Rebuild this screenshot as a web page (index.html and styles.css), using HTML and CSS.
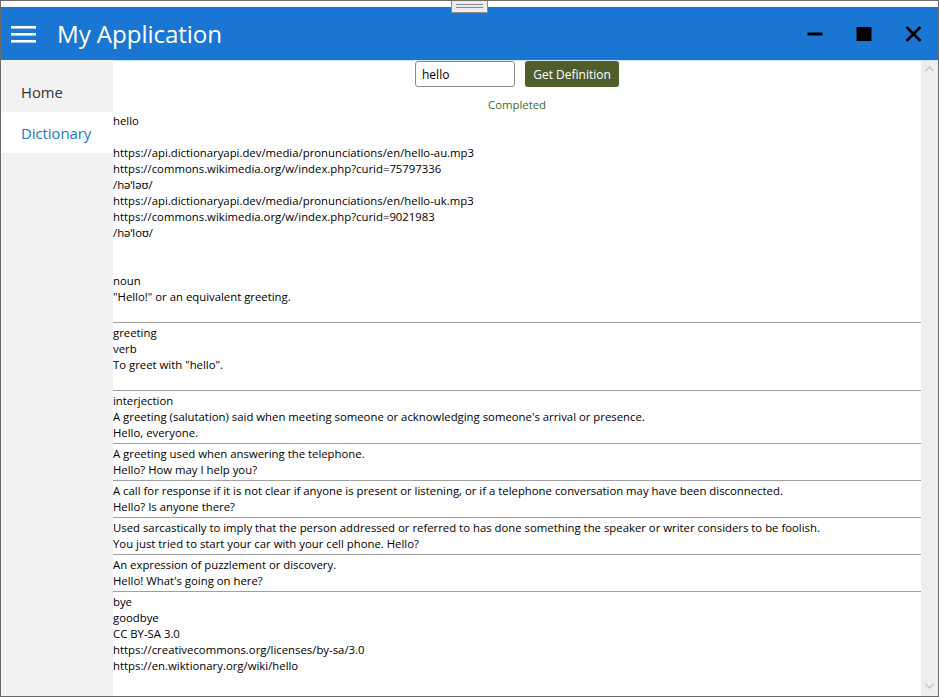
FILE: index.html
```html
<!DOCTYPE html>
<html>
<head>
<meta charset="utf-8">
<link rel="stylesheet" href="styles.css">
</head>
<body>
<div class="window">
  <div class="topstrip"></div>
  <div class="grip"><span></span><span></span></div>
  <header class="header">
    <svg class="hamburger" width="26" height="18" viewBox="0 0 26 18"><rect x="0" y="1" width="25" height="2.6" fill="#fff"/><rect x="0" y="8" width="25" height="2.6" fill="#fff"/><rect x="0" y="15" width="25" height="2.6" fill="#fff"/></svg>
    <h1 class="title">My Application</h1>
    <div class="controls">
      <svg class="ctl" width="16" height="16" viewBox="0 0 16 16"><rect x="0.5" y="6.5" width="15" height="3" fill="#000"/></svg>
      <svg class="ctl" width="16" height="16" viewBox="0 0 16 16"><rect x="0.5" y="1" width="15" height="14" fill="#000"/></svg>
      <svg class="ctl" width="17" height="16" viewBox="0 0 17 16"><path d="M1.5 1 L15.5 15 M15.5 1 L1.5 15" stroke="#000" stroke-width="2.8" fill="none"/></svg>
    </div>
  </header>
  <div class="main">
    <nav class="nav">
      <div class="nav-item">Home</div>
      <div class="nav-item active">Dictionary</div>
    </nav>
    <section class="content">
      <div class="scroll-area">
        <div class="form-row">
          <input class="word-input" type="text" value="hello">
          <button class="btn">Get Definition</button>
        </div>
        <div class="status">Completed</div>
        <div class="block first">
          <div>hello</div>
          <div class="blank"></div>
          <div>https://api.dictionaryapi.dev/media/pronunciations/en/hello-au.mp3</div>
          <div>https://commons.wikimedia.org/w/index.php?curid=75797336</div>
          <div>/həˈləʊ/</div>
          <div>https://api.dictionaryapi.dev/media/pronunciations/en/hello-uk.mp3</div>
          <div>https://commons.wikimedia.org/w/index.php?curid=9021983</div>
          <div>/həˈloʊ/</div>
          <div class="blank"></div>
          <div class="blank"></div>
          <div>noun</div>
          <div>"Hello!" or an equivalent greeting.</div>
          <div class="blank"></div>
        </div>
        <div class="block tight">
          <div>greeting</div>
          <div>verb</div>
          <div>To greet with "hello".</div>
          <div class="blank"></div>
        </div>
        <div class="block">
          <div>interjection</div>
          <div>A greeting (salutation) said when meeting someone or acknowledging someone's arrival or presence.</div>
          <div>Hello, everyone.</div>
        </div>
        <div class="block">
          <div>A greeting used when answering the telephone.</div>
          <div>Hello? How may I help you?</div>
        </div>
        <div class="block">
          <div>A call for response if it is not clear if anyone is present or listening, or if a telephone conversation may have been disconnected.</div>
          <div>Hello? Is anyone there?</div>
        </div>
        <div class="block">
          <div>Used sarcastically to imply that the person addressed or referred to has done something the speaker or writer considers to be foolish.</div>
          <div>You just tried to start your car with your cell phone. Hello?</div>
        </div>
        <div class="block">
          <div>An expression of puzzlement or discovery.</div>
          <div>Hello! What's going on here?</div>
        </div>
        <div class="block last">
          <div>bye</div>
          <div>goodbye</div>
          <div>CC BY-SA 3.0</div>
          <div>https://creativecommons.org/licenses/by-sa/3.0</div>
          <div>https://en.wiktionary.org/wiki/hello</div>
        </div>
      </div>
      <div class="scrollbar">
        <svg width="17" height="12" viewBox="0 0 17 12"><path d="M4.5 8 L8.5 4 L12.5 8" stroke="#c4c4c4" stroke-width="1.3" fill="none"/></svg>
        <svg width="17" height="12" viewBox="0 0 17 12"><path d="M4.5 4 L8.5 8 L12.5 4" stroke="#c4c4c4" stroke-width="1.3" fill="none"/></svg>
      </div>
    </section>
  </div>
</div>
</body>
</html>
```
FILE: styles.css
```css
* { box-sizing: border-box; }
html, body { margin: 0; padding: 0; background: #fff; }
body { font-family: "Open Sans", "Noto Sans", sans-serif; }

.window {
  position: relative;
  width: 939px;
  height: 697px;
  border: 1px solid #6b6b6b;
  display: flex;
  flex-direction: column;
  overflow: hidden;
}

.topstrip { height: 6px; background: #fff; flex: none; }

.grip {
  position: absolute;
  left: 450px;
  top: -1px;
  width: 37px;
  height: 13px;
  background: #ececf0;
  border: 1px solid #8c8c8c;
  border-top: none;
  display: flex;
  flex-direction: column;
  align-items: center;
  justify-content: center;
  gap: 2px;
  z-index: 2;
}
.grip span { display: block; width: 27px; height: 1px; background: #8a8a8a; }

.header {
  flex: none;
  height: 53px;
  background: #1976d2;
  display: flex;
  align-items: center;
  padding-left: 10px;
}
.hamburger { display: block; margin-top: 1px; }
.title {
  margin: 3px 0 0 20px;
  font-weight: 400;
  font-size: 24.2px;
  color: #fff;
  letter-spacing: -0.1px;
  line-height: 1;
  padding-bottom: 1px;
}
.controls {
  margin-left: auto;
  display: flex;
  align-items: center;
  gap: 33px;
  padding-right: 16px;
}
.ctl { display: block; }

.main { flex: 1; display: flex; min-height: 0; }

.nav {
  width: 112px;
  flex: none;
  background: #f2f2f2;
  padding-top: 11px;
}
.nav-item {
  height: 41px;
  line-height: 41px;
  padding: 1px 0 0 20px;
  font-size: 14.8px;
  color: #333;
}
.nav-item.active { background: #fff; color: #1976d2; }

.content {
  flex: 1;
  display: flex;
  min-width: 0;
  border-top: 1px solid #cfe2f5;
}
.scroll-area {
  flex: 1;
  min-width: 0;
  overflow: hidden;
  font-size: 11.35px;
  line-height: 16px;
  color: #000;
  white-space: nowrap;
}

.form-row {
  display: flex;
  justify-content: center;
  gap: 10px;
  height: 26px;
}
.word-input {
  width: 100px;
  height: 26px;
  border: 1px solid #8a8a8a;
  border-radius: 3px;
  padding: 0 6px;
  font-family: inherit;
  font-size: 12px;
  color: #000;
  outline: none;
}
.btn {
  width: 94px;
  height: 26px;
  border: none;
  border-radius: 3px;
  background: #4f5e2b;
  color: #fff;
  font-family: inherit;
  font-size: 12px;
  padding: 0;
}
.status {
  margin-top: 10px;
  text-align: center;
  color: #3f6a1f;
  height: 16px;
}

.block {
  padding: 2px 0 2px;
  border-bottom: 1px solid #a0a0a0;
}
.block.first { padding-top: 0; padding-bottom: 1px; }
.block.tight { padding-bottom: 1px; }
.block.last { border-bottom: none; }
.blank { height: 16px; }

.scrollbar {
  width: 17px;
  flex: none;
  background: #eeeeee;
  display: flex;
  flex-direction: column;
  justify-content: space-between;
  padding: 2px 0 4px;
}
.scrollbar svg { display: block; }
```
